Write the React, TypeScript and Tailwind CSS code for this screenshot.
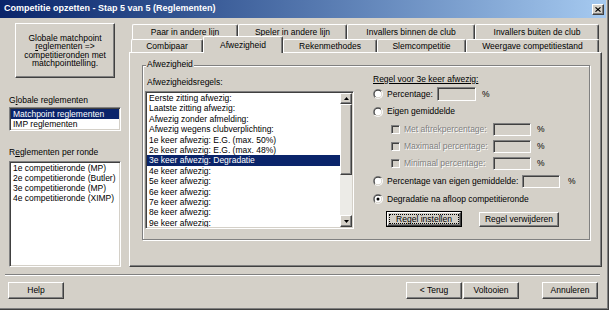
import React from 'react';

const bevel =
  'border border-t-white border-l-white border-r-[#404040] border-b-[#404040] shadow-[inset_-1px_-1px_0_#808080] bg-[#d4d0c8]';
const sunken =
  'border border-t-[#808080] border-l-[#808080] border-r-white border-b-white shadow-[inset_1px_1px_0_#404040,inset_-1px_-1px_0_#d4d0c8]';
const greyText = 'text-[#808080] [text-shadow:1px_1px_0_#fff]';

const Radio = ({ checked }: { checked?: boolean }) => (
  <svg width="10" height="10" viewBox="0 0 12 12" className="shrink-0">
    <defs>
      <linearGradient id="radio-out" x1="0" y1="0" x2="1" y2="1">
        <stop offset="0.5" stopColor="#808080" />
        <stop offset="0.5" stopColor="#ffffff" />
      </linearGradient>
      <linearGradient id="radio-in" x1="0" y1="0" x2="1" y2="1">
        <stop offset="0.5" stopColor="#404040" />
        <stop offset="0.5" stopColor="#d4d0c8" />
      </linearGradient>
    </defs>
    <circle cx="6" cy="6" r="6" fill="url(#radio-out)" />
    <circle cx="6" cy="6" r="5" fill="url(#radio-in)" />
    <circle cx="6" cy="6" r="4" fill="#fff" />
    {checked && <circle cx="6" cy="6" r="1.8" fill="#000" />}
  </svg>
);

const Arrow = ({ down }: { down?: boolean }) => (
  <svg width="5" height="3" viewBox="0 0 7 4">
    <path d={down ? 'M0 0H7L3.5 4Z' : 'M3.5 0L7 4H0Z'} fill="#000" />
  </svg>
);

const Box = ({ className }: { className: string }) => <div className={`${sunken} bg-[#d4d0c8] ${className}`} />;

const Btn = ({ children, className }: { children: React.ReactNode; className: string }) => (
  <button className={`${bevel} flex items-center justify-center leading-none ${className}`}>{children}</button>
);

const Tab = ({ label, className, active }: { label: string; className: string; active?: boolean }) => (
  <div
    className={`shrink-0 flex justify-center border-t border-l border-white border-r border-r-[#404040] rounded-t-[2px] shadow-[inset_-1px_0_0_#808080] bg-[#d4d0c8] ${
      active ? 'h-[17px] -mt-[3px] items-start pt-[2px]' : 'items-center'
    } ${className}`}
  >
    {label}
  </div>
);

const rules = [
  'Eerste zitting afwezig:',
  'Laatste zitting afwezig:',
  'Afwezig zonder afmelding:',
  'Afwezig wegens clubverplichting:',
  '1e keer afwezig: E.G. (max. 50%)',
  '2e keer afwezig: E.G. (max. 48%)',
  '3e keer afwezig: Degradatie',
  '4e keer afwezig:',
  '5e keer afwezig:',
  '6e keer afwezig:',
  '7e keer afwezig:',
  '8e keer afwezig:',
  '9e keer afwezig:',
];

const rondes = ['1e competitieronde (MP)', '2e competitieronde (Butler)', '3e competitieronde (MP)', '4e competitieronde (XIMP)'];

export default function App() {
  return (
    <div className="w-[609px] h-[310px] bg-[#d4d0c8] flex flex-col overflow-hidden font-['Liberation_Sans',Arial,sans-serif] text-[8.5px] text-black shadow-[inset_-1px_-1px_0_#404040,inset_-2px_-2px_0_#808080]">
      {/* Title bar */}
      <div className="h-[18px] mr-[3px] shrink-0 flex items-center pl-[4px] pr-[2px] bg-gradient-to-r from-[#0a246a] to-[#a6caf0]">
        <span className="flex-1 text-white font-bold text-[9px]">Competitie opzetten - Stap 5 van 5 (Reglementen)</span>
        <button className={`${bevel} w-[12px] h-[11px] flex items-center justify-center`}>
          <svg width="6" height="5" viewBox="0 0 8 7">
            <path d="M0.5 0.5L7.5 6.5M7.5 0.5L0.5 6.5" stroke="#000" strokeWidth="1.6" />
          </svg>
        </button>
      </div>

      {/* Main */}
      <div className="flex mt-[5px] pl-[8px] h-[244px] shrink-0">
        {/* Left column */}
        <div className="w-[114px] flex flex-col">
          <Btn className="ml-[7px] w-[100px] h-[55px] leading-[10.6px] text-center">
            <span>
              Globale matchpoint
              <br />
              <u>r</u>eglementen =&gt;
              <br />
              competitieronden met
              <br />
              matchpointtelling.
            </span>
          </Btn>
          <div className="ml-[1px] mt-[17px] h-[11px] leading-[11px]">
            G<u>l</u>obale reglementen
          </div>
          <div className={`${sunken} ml-[1px] mt-[1px] w-[112px] h-[24px] p-[1px] bg-white`}>
            <div className="h-[10px] leading-[10px] pl-[2px] bg-[#0a246a] text-white">Matchpoint reglementen</div>
            <div className="h-[10px] leading-[10px] pl-[2px]">IMP reglementen</div>
          </div>
          <div className="ml-[1px] mt-[16px] h-[11px] leading-[11px]">
            R<u>e</u>glementen per ronde
          </div>
          <div className={`${sunken} ml-[1px] mt-[3px] w-[112px] flex-1 p-[1px] bg-white`}>
            {rondes.map(r => (
              <div key={r} className="h-[10px] leading-[10px] pl-[2px]">
                {r}
              </div>
            ))}
          </div>
        </div>

        {/* Tab control */}
        <div className="ml-[7px] w-[473px] mt-[1px] flex flex-col">
          <div className="flex h-[15px] pl-[3px]">
            <Tab label="Paar in andere lijn" className="w-[106px]" />
            <Tab label="Speler in andere lijn" className="w-[109px]" />
            <Tab label="Invallers binnen de club" className="w-[128px]" />
            <Tab label="Invallers buiten de club" className="w-[124px]" />
          </div>
          <div className="relative z-10 flex items-start h-[13px] pl-[2px]">
            <Tab label="Combipaar" className="w-[72px] h-[13px]" />
            <Tab label="Afwezigheid" className="w-[80px]" active />
            <Tab label="Rekenmethodes" className="w-[94px] h-[13px]" />
            <Tab label="Slemcompetitie" className="w-[89px] h-[13px]" />
            <Tab label="Weergave competitiestand" className="w-[133px] h-[13px]" />
          </div>
          <div className={`${bevel} h-[215px] pl-[12px] pt-[12px]`}>
            {/* Group box */}
            <div className="relative w-[448px] h-[175px] border border-[#808080] shadow-[inset_1px_1px_0_#fff,1px_1px_0_#fff] flex">
              <span className="absolute left-[3px] -top-[7px] px-[1px] leading-[11px] bg-[#d4d0c8]">Afwezigheid</span>

              <div className="ml-[2px] w-[209px] flex flex-col">
                <div className="ml-[2px] mt-[11px] h-[11px] leading-[11px]">Afwezigheidsregels:</div>
                <div className={`${sunken} mt-[3px] h-[138px] p-[1px] bg-white flex`}>
                  <div className="flex-1 overflow-hidden">
                    {rules.map((r, i) => (
                      <div
                        key={r}
                        className={`h-[10.4px] leading-[10.4px] pl-[2px] whitespace-nowrap ${
                          i === 6 ? 'bg-[#0a246a] text-white' : ''
                        }`}
                      >
                        {r}
                      </div>
                    ))}
                  </div>
                  <div className="w-[12px] flex flex-col">
                    <div className={`${bevel} h-[11px] flex items-center justify-center`}>
                      <Arrow />
                    </div>
                    <div className={`${bevel} h-[71px]`} />
                    <div className="flex-1 bg-[#ecebe7]" />
                    <div className={`${bevel} h-[12px] flex items-center justify-center`}>
                      <Arrow down />
                    </div>
                  </div>
                </div>
              </div>

              <div className="ml-[19px] mt-[6px] flex flex-col">
                <div className="h-[14px] flex items-center">
                  <span className="underline">Regel voor 3e keer afwezig:</span>
                </div>
                <div className="h-[16px] flex items-center">
                  <Radio />
                  <span className="ml-[4px] w-[50px]">Percentage:</span>
                  <Box className="w-[39px] h-[14px]" />
                  <span className="ml-[6px]">%</span>
                </div>
                <div className="h-[19px] flex items-center">
                  <Radio />
                  <span className="ml-[4px]">Eigen gemiddelde</span>
                </div>
                {['Met aftrekpercentage:', 'Maximaal percentage:', 'Minimaal percentage:'].map(l => (
                  <div key={l} className="h-[17px] flex items-center pl-[18px]">
                    <Box className="w-[9px] h-[9px]" />
                    <span className={`ml-[4px] w-[89px] ${greyText}`}>{l}</span>
                    <Box className="w-[38px] h-[13px]" />
                    <span className="ml-[6px]">%</span>
                  </div>
                ))}
                <div className="h-[18px] flex items-center">
                  <Radio />
                  <span className="ml-[4px] w-[135px]">Percentage van eigen gemiddelde:</span>
                  <Box className="w-[38px] h-[13px]" />
                  <span className="ml-[8px]">%</span>
                </div>
                <div className="h-[18px] flex items-center">
                  <Radio checked />
                  <span className="ml-[4px]">Degradatie na afloop competitieronde</span>
                </div>
                <div className="mt-[3px] flex items-start">
                  <button className="ml-[13px] w-[76px] h-[16px] border border-black p-0">
                    <div className={`${bevel} w-full h-full p-[1px] flex`}>
                      <span className="flex-1 border border-dotted border-black flex items-center justify-center leading-none">
                        Regel instellen
                      </span>
                    </div>
                  </button>
                  <Btn className="ml-[17px] mt-[1px] w-[80px] h-[15px]">Regel verwijderen</Btn>
                </div>
              </div>
            </div>
          </div>
        </div>
      </div>

      {/* Separator */}
      <div className="mt-[7px] ml-[5px] w-[595px] h-[2px] border-t border-t-[#808080] border-b border-b-white shrink-0" />

      {/* Bottom buttons */}
      <div className="mt-[6px] h-[17px] flex pl-[8px] pr-[11px] shrink-0">
        <Btn className="w-[56px] h-[17px]">Help</Btn>
        <div className="flex-1" />
        <Btn className="w-[56px] h-[17px]">&lt; Terug</Btn>
        <Btn className="ml-[1px] w-[56px] h-[17px]">Voltooien</Btn>
        <Btn className="ml-[23px] w-[56px] h-[17px]">Annuleren</Btn>
      </div>
    </div>
  );
}
